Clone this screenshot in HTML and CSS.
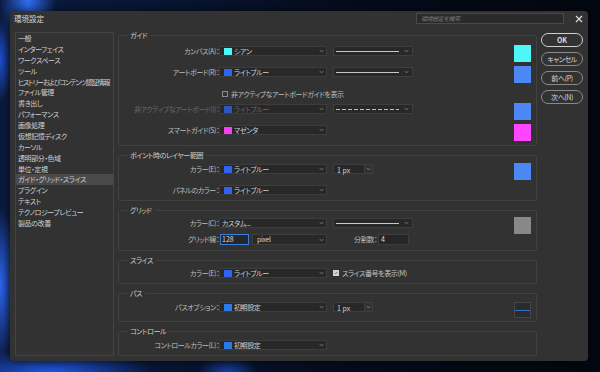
FILE: index.html
```html
<!DOCTYPE html>
<html lang="ja">
<head>
    <meta charset="UTF-8">
    <title>環境設定</title>
    <link rel="stylesheet" href="styles.css">
</head>
<body>
    <div class="dialog">
        <div class="titlebar">
            <span class="title">環境設定</span>
            <div class="search">環境設定を検索</div>
            <svg class="close" viewBox="0 0 8 8"><path d="M1 1l6 6M7 1l-6 6"/></svg>
        </div>

        <div class="main">
            <ul class="nav">
                <li>一般</li>
                <li>インターフェイス</li>
                <li>ワークスペース</li>
                <li>ツール</li>
                <li class="long">ヒストリーおよびコンテンツ認証情報</li>
                <li>ファイル管理</li>
                <li>書き出し</li>
                <li>パフォーマンス</li>
                <li>画像処理</li>
                <li>仮想記憶ディスク</li>
                <li>カーソル</li>
                <li>透明部分・色域</li>
                <li>単位・定規</li>
                <li class="active">ガイド・グリッド・スライス</li>
                <li>プラグイン</li>
                <li>テキスト</li>
                <li>テクノロジープレビュー</li>
                <li>製品の改善</li>
            </ul>

            <div class="panel">
                <!-- ガイド -->
                <fieldset class="group guide">
                    <legend>ガイド</legend>
                    <div class="row">
                        <span class="lbl">カンバス(A)：</span>
                        <div class="select"><i class="chip cyan"></i><span>シアン</span><svg class="chev" viewBox="0 0 6 4"><path d="M1 1l2 2 2-2"/></svg></div>
                        <div class="select line"><span class="stroke"></span><svg class="chev" viewBox="0 0 6 4"><path d="M1 1l2 2 2-2"/></svg></div>
                        <span class="swatch cyan"></span>
                    </div>
                    <div class="row">
                        <span class="lbl">アートボード(R)：</span>
                        <div class="select"><i class="chip blue"></i><span>ライトブルー</span><svg class="chev" viewBox="0 0 6 4"><path d="M1 1l2 2 2-2"/></svg></div>
                        <div class="select line"><span class="stroke"></span><svg class="chev" viewBox="0 0 6 4"><path d="M1 1l2 2 2-2"/></svg></div>
                        <span class="swatch blue"></span>
                    </div>
                    <div class="row check-row">
                        <span class="box"></span>
                        <span>非アクティブなアートボードガイドを表示</span>
                    </div>
                    <div class="row off">
                        <span class="lbl">非アクティブなアートボード(I)：</span>
                        <div class="select"><i class="chip blue"></i><span>ライトブルー</span><svg class="chev" viewBox="0 0 6 4"><path d="M1 1l2 2 2-2"/></svg></div>
                        <div class="select line"><span class="stroke dashed"></span><svg class="chev" viewBox="0 0 6 4"><path d="M1 1l2 2 2-2"/></svg></div>
                        <span class="swatch blue"></span>
                    </div>
                    <div class="row">
                        <span class="lbl">スマートガイド(S)：</span>
                        <div class="select"><i class="chip magenta"></i><span>マゼンタ</span><svg class="chev" viewBox="0 0 6 4"><path d="M1 1l2 2 2-2"/></svg></div>
                        <span class="swatch magenta"></span>
                    </div>
                </fieldset>

                <!-- ポイント時のレイヤー範囲 -->
                <fieldset class="group hover">
                    <legend>ポイント時のレイヤー範囲</legend>
                    <div class="row">
                        <span class="lbl">カラー(E)：</span>
                        <div class="select"><i class="chip blue"></i><span>ライトブルー</span><svg class="chev" viewBox="0 0 6 4"><path d="M1 1l2 2 2-2"/></svg></div>
                        <div class="combo"><span class="field">1 px</span><span class="drop"><svg class="chev" viewBox="0 0 6 4"><path d="M1 1l2 2 2-2"/></svg></span></div>
                        <span class="swatch blue"></span>
                    </div>
                    <div class="row">
                        <span class="lbl">パネルのカラー：</span>
                        <div class="select"><i class="chip blue"></i><span>ライトブルー</span><svg class="chev" viewBox="0 0 6 4"><path d="M1 1l2 2 2-2"/></svg></div>
                    </div>
                </fieldset>

                <!-- グリッド -->
                <fieldset class="group grid">
                    <legend>グリッド</legend>
                    <div class="row">
                        <span class="lbl">カラー(C)：</span>
                        <div class="select plain"><span>カスタム...</span><svg class="chev" viewBox="0 0 6 4"><path d="M1 1l2 2 2-2"/></svg></div>
                        <div class="select line"><span class="stroke"></span><svg class="chev" viewBox="0 0 6 4"><path d="M1 1l2 2 2-2"/></svg></div>
                        <span class="swatch gray"></span>
                    </div>
                    <div class="row tall">
                        <span class="lbl">グリッド線：</span>
                        <span class="num focus">128</span>
                        <div class="select unit"><span>pixel</span><svg class="chev" viewBox="0 0 6 4"><path d="M1 1l2 2 2-2"/></svg></div>
                        <span class="sub-lbl">分割数：</span>
                        <span class="num count">4</span>
                    </div>
                </fieldset>

                <!-- スライス -->
                <fieldset class="group slice">
                    <legend>スライス</legend>
                    <div class="row">
                        <span class="lbl">カラー(E)：</span>
                        <div class="select"><i class="chip blue"></i><span>ライトブルー</span><svg class="chev" viewBox="0 0 6 4"><path d="M1 1l2 2 2-2"/></svg></div>
                        <span class="box checked"><svg viewBox="0 0 6 6"><path d="M1.2 3l1.3 1.3 2.3-2.6"/></svg></span>
                        <span class="box-text">スライス番号を表示(M)</span>
                    </div>
                </fieldset>

                <!-- パス -->
                <fieldset class="group path">
                    <legend>パス</legend>
                    <div class="row">
                        <span class="lbl">パスオプション：</span>
                        <div class="select"><i class="chip default"></i><span>初期設定</span><svg class="chev" viewBox="0 0 6 4"><path d="M1 1l2 2 2-2"/></svg></div>
                        <div class="combo"><span class="field">1 px</span><span class="drop"><svg class="chev" viewBox="0 0 6 4"><path d="M1 1l2 2 2-2"/></svg></span></div>
                        <span class="swatch path-line"></span>
                    </div>
                </fieldset>

                <!-- コントロール -->
                <fieldset class="group control">
                    <legend>コントロール</legend>
                    <div class="row">
                        <span class="lbl">コントロールカラー(L)：</span>
                        <div class="select"><i class="chip default"></i><span>初期設定</span><svg class="chev" viewBox="0 0 6 4"><path d="M1 1l2 2 2-2"/></svg></div>
                    </div>
                </fieldset>
            </div>

            <div class="actions">
                <div class="btn primary">OK</div>
                <div class="btn">キャンセル</div>
                <div class="btn">前へ(P)</div>
                <div class="btn">次へ(N)</div>
            </div>
        </div>
    </div>
</body>
</html>
```

FILE: styles.css
```css
* {
    box-sizing: border-box;
}

body {
    margin: 0;
    width: 600px;
    height: 372px;
    overflow: hidden;
    font-family: "Noto Sans CJK JP", "Liberation Sans", sans-serif;
    font-size: 7px;
    letter-spacing: -0.4px;
    font-feature-settings: "palt" 1;
    color: #bdbdbd;
    background:
        radial-gradient(ellipse 40px 80px at 28px 0, #2f6ff5, transparent 70%),
        radial-gradient(ellipse 26px 110px at 0 285px, #2c66f0, transparent 70%),
        radial-gradient(ellipse 18px 60px at 0 60px, #1e4fd0, transparent 70%),
        radial-gradient(ellipse 140px 30px at 50px 372px, #1f56e0, transparent 75%),
        radial-gradient(ellipse 40px 20px at 228px 372px, #16409f, transparent 75%),
        linear-gradient(90deg, #0c1a3e 0, #081430 30%, #050b1a 60%, #03070f 100%);
}

/* окно диалога */
.dialog {
    margin: 11px 0 0 10px;
    width: 578px;
    height: 350px;
    background: #323232;
    border-radius: 4px;
    display: flex;
    flex-direction: column;
    box-shadow: 0 0 8px rgba(0, 0, 0, 0.6);
}

.titlebar {
    height: 19px;
    display: flex;
    align-items: flex-start;
    padding: 2px 5px 0 4px;
}

.title {
    flex: 1;
    line-height: 11px;
    font-size: 7.5px;
    letter-spacing: 0;
    color: #d6d6d6;
}

.search {
    width: 148px;
    height: 11px;
    background: #2a2a2a;
    border: 1px solid #4a4a4a;
    padding-left: 4px;
    font-size: 6px;
    font-style: italic;
    line-height: 9px;
    color: #7a7a7a;
}

.close {
    width: 8px;
    height: 8px;
    margin: 2px 0 0 11px;
    fill: none;
    stroke: #dcdcdc;
    stroke-width: 1.2;
}

.main {
    flex: 1;
    display: flex;
    gap: 4px;
    padding: 0 5px 5px;
}

/* список разделов */
.nav {
    list-style: none;
    margin: 2px 0 0;
    padding: 0;
    width: 99px;
    flex: none;
    border: 1px solid #444;
}

.nav li {
    height: 10.88px;
    line-height: 10.88px;
    padding-left: 2px;
    color: #d0d0d0;
    white-space: nowrap;
}

.nav li.long {
    letter-spacing: -1.1px;
}

.nav li.active {
    background: #4a4a4a;
}

/* правая часть с группами */
.panel {
    width: 419px;
    flex: none;
    display: flex;
    flex-direction: column;
    gap: 4px;
}

.group {
    margin: 0;
    padding: 0 5px 0 0;
    min-width: 0;
    border: 1px solid #414141;
    border-radius: 2px;
}

.group legend {
    margin-left: 8px;
    padding: 0 3px;
    line-height: 10px;
    color: #cbcbcb;
}

.guide { height: 116px; padding-top: 6px; }
.hover { height: 51px; padding-top: 4px; }
.grid { height: 46px; padding-top: 3px; }
.slice { height: 29px; padding-top: 3px; }
.path { height: 34px; padding-top: 4px; }
.control { height: 30px; padding-top: 4px; }

.row {
    display: flex;
    align-items: flex-start;
    height: 10px;
    line-height: 10px;
    white-space: nowrap;
}

.row + .row {
    margin-top: 11px;
}

.guide .check-row {
    margin-top: 12px;
}

.guide .check-row + .row {
    margin-top: 5px;
}

.grid .row + .row {
    margin-top: 6px;
}

.row.tall {
    height: 11px;
    line-height: 11px;
}

.lbl {
    width: 100px;
    flex: none;
    text-align: right;
}

.off,
.off .select {
    color: #696969;
}

.off .chip {
    opacity: 0.75;
}

/* выпадающие списки */
.select {
    width: 108px;
    height: 10px;
    flex: none;
    display: flex;
    align-items: center;
    padding: 0 2px 0 4px;
    background: #282828;
    border: 1px solid #3d3d3d;
    color: #cfcfcf;
}

.select.plain {
    padding-left: 2px;
}

.select.line {
    width: 80px;
    margin-left: 6px;
    padding: 0 3px 0 2px;
}

.select.unit {
    width: 75px;
    height: 11px;
    margin-left: 3px;
}

.chip {
    width: 8px;
    height: 7px;
    margin-right: 2px;
    flex: none;
}

.stroke {
    flex: 1;
    height: 1px;
    margin-right: 5px;
    background: #c8c8c8;
}

.stroke.dashed {
    background: repeating-linear-gradient(90deg, #c0c0c0 0 4px, transparent 4px 6px);
}

.chev {
    width: 5px;
    height: 4px;
    margin-left: auto;
    flex: none;
    fill: none;
    stroke: #8c8c8c;
    stroke-width: 1;
}

.combo {
    display: flex;
    margin-left: 6px;
    height: 10px;
}

.combo .field {
    width: 32px;
    height: 10px;
    padding-left: 3px;
    background: #282828;
    border: 1px solid #3d3d3d;
    color: #d2d2d2;
    letter-spacing: 0;
}

.combo .drop {
    width: 8px;
    height: 10px;
    display: flex;
    align-items: center;
    justify-content: center;
    border: 1px solid #3d3d3d;
    border-left: none;
}

.combo .drop .chev {
    margin: 0;
}

.num {
    height: 11px;
    line-height: 9px;
    background: #262626;
    border: 1px solid #3d3d3d;
    color: #d8d8d8;
    letter-spacing: 0;
}

.num.focus {
    width: 29px;
    margin-left: 1px;
    padding-left: 1px;
    border-color: #3a7de0;
}

.sub-lbl {
    margin-left: 18px;
    width: 32px;
    text-align: right;
}

.num.count {
    width: 31px;
    margin-left: 1px;
    padding-left: 2px;
}

/* чекбоксы */
.check-row {
    align-items: center;
    padding-left: 103px;
}

.box {
    width: 6px;
    height: 6px;
    flex: none;
    margin-right: 3px;
    border: 1px solid #8e8e8e;
}

.slice .box {
    margin: 2px 3px 0 6px;
}

.box.checked {
    background: #d4d4d4;
    border-color: #d4d4d4;
    display: flex;
}

.box.checked svg {
    width: 100%;
    height: 100%;
    fill: none;
    stroke: #333;
    stroke-width: 1;
}

.box-text {
    color: #c4c4c4;
}

/* цветовые образцы */
.swatch {
    width: 17px;
    height: 17px;
    flex: none;
    margin: -1px 0 0 auto;
}

.cyan { background: #4ef6f8; }
.blue { background: #2f63f2; }
.magenta { background: #f53ff5; }
.default { background: #2a7be6; }
.swatch.blue { background: #4d86f5; }
.swatch.magenta { background: #ff45ff; }
.swatch.gray { background: #888; }

.swatch.path-line {
    margin-top: 0;
    height: 16px;
    background: linear-gradient(#2e6fd0, #2e6fd0) center / 100% 1px no-repeat, #2b2b2b;
    border: 1px solid #454545;
}

/* кнопки */
.actions {
    width: 42px;
    flex: none;
    margin-top: 3px;
    display: flex;
    flex-direction: column;
    gap: 5px;
}

.btn {
    height: 14px;
    line-height: 12px;
    text-align: center;
    border: 1px solid #8a8a8a;
    border-radius: 7px;
    color: #dcdcdc;
}

.btn.primary {
    border-color: #cfcfcf;
    font-weight: bold;
    letter-spacing: 0;
}
```
